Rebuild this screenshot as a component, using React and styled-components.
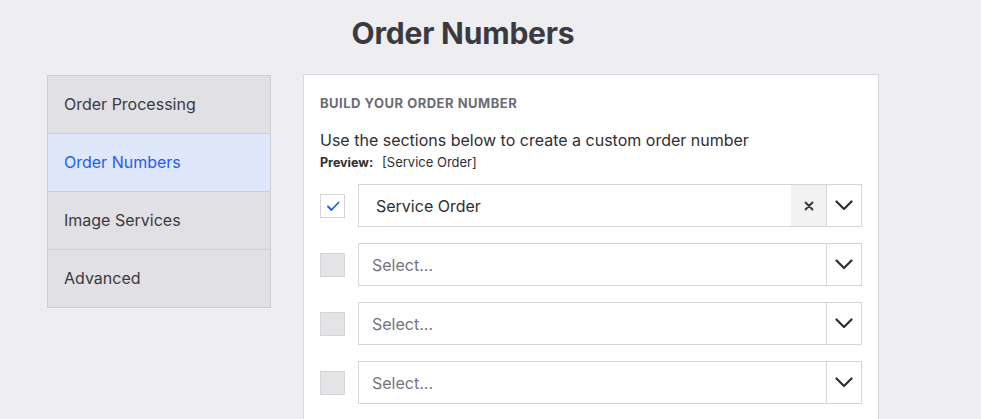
import React from "react";
import styled, { createGlobalStyle } from "styled-components";

const Global = createGlobalStyle`
  html, body { margin: 0; padding: 0; background: #eeeef0; }
  body { font-family: Inter, "Noto Sans", sans-serif; color: #2e2e33; }
  * { box-sizing: border-box; }
`;

const Page = styled.div`
  width: 832px;
  margin-left: 47px;
`;

const Title = styled.h1`
  margin: 0;
  padding-top: 15px;
  height: 74px;
  text-align: center;
  font-size: 30px;
  font-weight: 700;
  color: #3a3a40;
  letter-spacing: -0.2px;
`;

const Body = styled.div`
  display: flex;
  align-items: flex-start;
  gap: 32px;
`;

const Sidebar = styled.nav`
  width: 224px;
  margin-top: 1px;
  border: 1px solid #cdcdd2;
  background: #e1e0e5;
  display: flex;
  flex-direction: column;
`;

const NavItem = styled.div`
  height: ${(p) => (p.$first ? "57px" : "58px")};
  display: flex;
  align-items: center;
  padding-left: 16px;
  padding-bottom: 1px;
  font-size: 16px;
  color: ${(p) => (p.$active ? "#1f5cf0" : "#3a3a40")};
  background: ${(p) => (p.$active ? "#dfe8fb" : "transparent")};
  border-top: ${(p) => (p.$first ? "none" : "1px solid #cdcdd2")};
`;

const Card = styled.section`
  width: 576px;
  height: 360px;
  background: #fff;
  border: 1px solid #d9d9dd;
  padding: 20px 16px 0 16px;
`;

const Heading = styled.h2`
  margin: 0;
  font-size: 13px;
  font-weight: 700;
  letter-spacing: 0.5px;
  text-transform: uppercase;
  color: #6b6b76;
  line-height: 16px;
`;

const Intro = styled.p`
  margin: 19px 0 0 0;
  font-size: 16px;
  line-height: 20px;
  color: #2e2e33;
`;

const Preview = styled.div`
  font-size: 13px;
  line-height: 16px;
  color: #2e2e33;
  display: flex;
  align-items: baseline;
  gap: 9px;
  margin-top: 4px;
`;

const PreviewLabel = styled.span`
  font-weight: 700;
  font-size: 12.5px;
`;

const Rows = styled.div`
  margin-top: 13px;
  display: flex;
  flex-direction: column;
  gap: 16px;
`;

const Row = styled.div`
  display: flex;
  align-items: center;
  gap: 13px;
`;

const Check = styled.div`
  width: 25px;
  height: 24px;
  flex: none;
  border: 1px solid #d6d6da;
  background: ${(p) => (p.$checked ? "#fff" : "#e4e4e7")};
  display: flex;
  align-items: center;
  justify-content: center;
`;

const Select = styled.div`
  flex: 1;
  height: 43px;
  border: 1px solid #d6d6da;
  display: flex;
  align-items: stretch;
  background: #fff;
`;

const Value = styled.div`
  flex: 1;
  display: flex;
  align-items: center;
  padding-left: ${(p) => (p.$placeholder ? "13px" : "17px")};
  font-size: 16px;
  color: ${(p) => (p.$placeholder ? "#74747e" : "#2e2e33")};
`;

const Clear = styled.div`
  width: 35px;
  background: #f2f2f3;
  display: flex;
  align-items: center;
  justify-content: center;
`;

const Toggle = styled.div`
  width: 35px;
  border-left: 1px solid #d6d6da;
  display: flex;
  align-items: center;
  justify-content: center;
`;

const CheckIcon = () => (
  <svg width="14" height="12" viewBox="0 0 14 12" fill="none">
    <path d="M2 6.5 L5.5 10 L12.5 2.5" stroke="#1f5cf0" strokeWidth="1.8" strokeLinecap="round" strokeLinejoin="round" />
  </svg>
);

const XIcon = () => (
  <svg width="10" height="10" viewBox="0 0 10 10" fill="none">
    <path d="M1.5 1.5 L8.5 8.5 M8.5 1.5 L1.5 8.5" stroke="#333338" strokeWidth="1.8" strokeLinecap="round" />
  </svg>
);

const Chevron = () => (
  <svg width="18" height="11" viewBox="0 0 18 11" fill="none">
    <path d="M1.5 1.5 L9 9 L16.5 1.5" stroke="#2e2e33" strokeWidth="2.2" strokeLinecap="round" strokeLinejoin="round" />
  </svg>
);

const nav = ["Order Processing", "Order Numbers", "Image Services", "Advanced"];
const rows = [
  { checked: true, value: "Service Order" },
  { checked: false },
  { checked: false },
  { checked: false },
];

export default function App() {
  return (
    <>
      <Global />
      <Page>
        <Title>Order Numbers</Title>
        <Body>
          <Sidebar>
            {nav.map((n, i) => (
              <NavItem key={n} $first={i === 0} $active={n === "Order Numbers"}>
                {n}
              </NavItem>
            ))}
          </Sidebar>
          <Card>
            <Heading>Build your order number</Heading>
            <Intro>Use the sections below to create a custom order number</Intro>
            <Preview>
              <PreviewLabel>Preview:</PreviewLabel>
              <span>[Service Order]</span>
            </Preview>
            <Rows>
              {rows.map((r, i) => (
                <Row key={i}>
                  <Check $checked={r.checked}>{r.checked && <CheckIcon />}</Check>
                  <Select>
                    <Value $placeholder={!r.value}>{r.value || "Select..."}</Value>
                    {r.value && (
                      <Clear>
                        <XIcon />
                      </Clear>
                    )}
                    <Toggle>
                      <Chevron />
                    </Toggle>
                  </Select>
                </Row>
              ))}
            </Rows>
          </Card>
        </Body>
      </Page>
    </>
  );
}
